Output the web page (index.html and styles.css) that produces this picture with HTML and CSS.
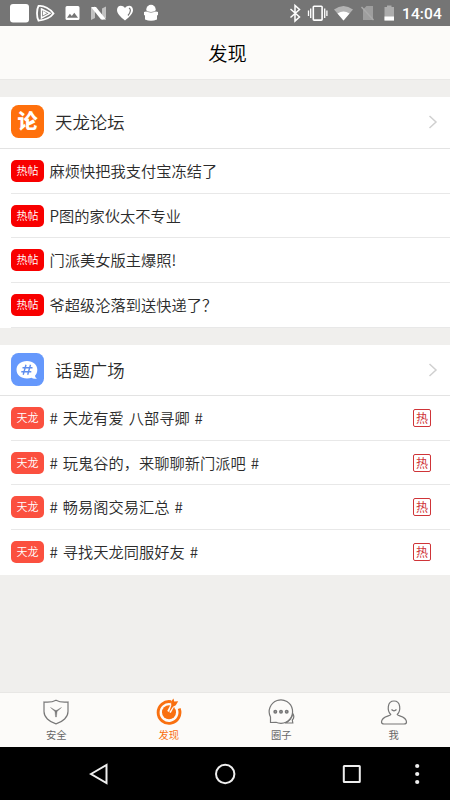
FILE: index.html
```html
<!DOCTYPE html>
<html lang="zh-CN">
<head>
<meta charset="utf-8">
<title>发现</title>
<link rel="stylesheet" href="styles.css">
</head>
<body>
<div class="status">
  <svg class="status-left" width="170" height="26" viewBox="0 0 170 26" fill="#fff">
    <rect x="10" y="4" width="19" height="18.500" rx="3"/>
    <path d="M38.500 6c5-1 12 3 15 7.500-3 4-9 6.500-15 7.200-2-4-2-11 0-14.700z" fill="none" stroke="#fff" stroke-width="1.800"/>
    <path d="M41.500 9l8.500 4.300-8.500 4.700z" fill="none" stroke="#fff" stroke-width="1.500"/><path d="M43 11l4 2.300-4 2.200z"/>
    <path d="M67 6h11q1.500 0 1.500 1.500v11q0 1.500-1.500 1.500H67q-1.500 0-1.500-1.500v-11Q65.500 6 67 6zm0 11.700h11l-3.700-5-2.500 3.300-1.900-2.200z" fill-rule="evenodd"/>
    <path d="M91 8l4-1.500V18l-4 2zM102 8.500l4-2V18l-4 2z" opacity=".55"/>
    <path d="M91 7h5l10 12.500h-5z"/>
    <path d="M125 20.500c-5-4-8-7-8-10.500 0-5 5.500-5.500 8-2 2.500-3.500 8-3 8 2 0 3.500-3 6.500-8 10.500z"/>
    <path d="M129 8c2 1 2 4-1 7.500" fill="none" stroke="#757575" stroke-width="1.200"/>
    <circle cx="151" cy="9.500" r="4.700"/><path d="M144 12l4-1 3 2.500 3-2.500 4 1v3l-1 .5v4q-6 2.500-12 0v-4l-1-.5z"/><path d="M146 11q5 3 10 0" fill="none" stroke="#757575" stroke-width=".6"/>
  </svg>
  <svg class="status-right" width="122" height="26" viewBox="280 0 122 26" fill="#fff">
    <path d="M290.500 9l9 8-4.500 4V5.500l4.500 4-9 8" fill="none" stroke="#fff" stroke-width="1.500"/>
    <rect x="313.300" y="6.300" width="8.800" height="13.800" rx=".8" fill="none" stroke="#fff" stroke-width="1.600"/>
    <path d="M310.700 8.500v9.500M308.500 10.500v5.500M324.700 8.500v9.500M326.900 10.500v5.500" stroke="#fff" stroke-width="1.300"/>
    <path d="M334 9.500q9.500-7 19 0l-9.500 11z" opacity=".45"/><path d="M337.500 13.500q6-4 12 0l-6 7z"/>
    <path d="M363 9.500l3.500-3.500H373v14h-10z" opacity=".3"/><path d="M361.500 7l12 13" stroke="#aaa" stroke-width="1.400"/>
    <path d="M387 5.500h4.500V7h2.500v13.500h-9.500V7h2.500z" opacity=".4"/><path d="M384.500 16.500h9.500v4h-9.500z"/>
  </svg>
  <time class="clock">14:04</time>
</div>
<header class="title">发现</header>
<main class="content">
  <section class="card">
    <div class="card-head">
      <svg class="app-icon" viewBox="0 0 33 33"><rect width="33" height="33" rx="7.500" fill="#ff700c"/><text class="glyph" x="16.500" y="24">论</text></svg>
      <h2>天龙论坛</h2>
      <svg class="chevron" viewBox="0 0 10 14"><path d="M1.500 1l6.500 6-6.500 6"/></svg>
    </div>
    <ul>
      <li><span class="badge">热帖</span><p>麻烦快把我支付宝冻结了</p></li>
      <li><span class="badge">热帖</span><p>P图的家伙太不专业</p></li>
      <li><span class="badge">热帖</span><p>门派美女版主爆照!</p></li>
      <li><span class="badge">热帖</span><p>爷超级沦落到送快递了？</p></li>
    </ul>
  </section>
  <section class="card topics">
    <div class="card-head">
      <svg class="app-icon" viewBox="0 0 33 33"><rect width="33" height="33" rx="7.500" fill="#6598fc"/><path d="M16 8c6 0 10.300 3.600 10.300 8.800 0 2.600-.9 4.500-2.300 6 .2 1.300.9 2.200 2 2.700-2.300.6-4.200.3-5.500-.8-1.300.5-2.800.8-4.500.8-6.300 0-10.500-3.500-10.500-8.700S9.700 8 16 8z" fill="#fff"/><path d="M15 11.800l-2.800 10M19.500 11.800l-2.800 10M11.500 14.800h10M10.300 18.800h10" stroke="#5f8eee" stroke-width="1.400"/></svg>
      <h2>话题广场</h2>
      <svg class="chevron" viewBox="0 0 10 14"><path d="M1.500 1l6.500 6-6.500 6"/></svg>
    </div>
    <ul>
      <li><span class="badge">天龙</span><p># 天龙有爱 八部寻卿 #</p><span class="hot">热</span></li>
      <li><span class="badge">天龙</span><p># 玩鬼谷的，来聊聊新门派吧 #</p><span class="hot">热</span></li>
      <li><span class="badge">天龙</span><p># 畅易阁交易汇总 #</p><span class="hot">热</span></li>
      <li><span class="badge">天龙</span><p># 寻找天龙同服好友 #</p><span class="hot">热</span></li>
    </ul>
  </section>
</main>
<nav class="tabs">
  <a class="tab"><svg viewBox="0 0 28 28"><path d="M14 2.200c-3.500 2-7.500 2.300-12 1.800v9.500C2 19 7 24 14 25.800 21 24 26 19 26 13.500V4c-4.500.5-8.500.2-12-1.800z"/><path d="M8.500 9.500l4.700 2.800h1.600l4.700-2.800-4.500 4-.6 5.500h-.8l-.6-5.500z" fill="#777" stroke-width=".4"/></svg><span>安全</span></a>
  <a class="tab active"><svg viewBox="0 0 28 28"><path d="M16 3.700A10.900 10.900 0 1 0 24.200 10.500" stroke-width="2.900"/><circle cx="14" cy="14.300" r="7" fill="#f97010" stroke="none"/><path d="M14 14l4-7.500" stroke="#fcfbf9" stroke-width="4"/><path d="M13.500 15.500l2.800-8-.3-4L18.500.5l.7 3 4-.2-2.400 4-2.800 1.500z" fill="#f97010" stroke="none"/></svg><span>发现</span></a>
  <a class="tab"><svg viewBox="0 0 28 28"><path d="M3.500 24.500V19A11.700 11.700 0 1 1 14 25.300c-2 0-3.500-.3-5-1z"/><path d="M25.800 15.500c1.500 2.500 1 5-.5 6.500l.5 3H18c4-1.500 7-4.500 7.800-9.500z"/><g stroke-width="1.600"><circle cx="8.300" cy="13.800" r="1.200"/><circle cx="14" cy="13.800" r="1.200"/><circle cx="19.700" cy="13.800" r="1.200"/></g></svg><span>圈子</span></a>
  <a class="tab"><svg viewBox="0 0 28 28"><path d="M10.800 16.500C7 13 7 3 14 3s7 10 3.200 13.500c.3 1.600 9.300 1.500 9.300 7.500 0 1.500-1 2-2.500 2H4c-1.500 0-2.500-.5-2.500-2 0-6 9-5.900 9.300-7.500z"/><path d="M11.500 11.500q2.500 2.500 5 0"/></svg><span>我</span></a>
</nav>
<footer class="system-nav">
  <svg width="450" height="53" viewBox="0 0 450 53" fill="none" stroke="#eee" stroke-width="2"><path d="M91 27l15.500-9v18z"/><circle cx="225.200" cy="27" r="9.200"/><rect x="343.800" y="19" width="16" height="16" rx=".5"/><g fill="#eee" stroke="none"><circle cx="417.200" cy="19" r="2.100"/><circle cx="417.200" cy="27" r="2.100"/><circle cx="417.200" cy="35" r="2.100"/></g></svg>
</footer>
</body>
</html>
```

FILE: styles.css
```css
* { box-sizing: border-box; margin: 0; padding: 0; }
body {
  display: flex; flex-direction: column; width: 450px; height: 800px; overflow: hidden;
  background: #f0efed; color: #2b2b2b; font-family: "Noto Sans CJK SC", sans-serif; font-weight: 350;
}
svg { display: block; flex: none; }
.status { display: flex; height: 26px; background: #757575; }
.status-right { margin-left: auto; }
.clock { width: 48px; color: #fff; font: 500 15.500px/28px Roboto, sans-serif; letter-spacing: .1px; }
.title {
  height: 54px; padding-left: 5px; background: #fcfbf9; border-bottom: 1px solid #e9e8e6;
  color: #000; font-size: 19.300px; line-height: 54px; text-align: center;
}
.content { flex: 1; padding-top: 17px; }
.card { height: 231px; margin-bottom: 17px; background: #fff; }
.card-head { display: flex; align-items: center; height: 52px; padding: 0 12px 2px 11px; border-bottom: 1px solid #e3e3e3; }
.app-icon { width: 33px; height: 33px; }
.glyph { fill: #fff; font-size: 20px; font-weight: 900; text-anchor: middle; }
h2 { flex: 1; margin-left: 11px; font-size: 17.400px; font-weight: 350; line-height: 26px; }
.chevron { width: 10px; height: 14px; fill: none; stroke: #d0d0d0; stroke-width: 1.500; }
ul { list-style: none; }
li { display: flex; align-items: center; height: 44.700px; margin-left: 11px; padding-right: 19px; border-bottom: 1px solid #e8e8e8; }
.badge { width: 33px; height: 22px; border-radius: 5px; background: #f80000; color: #fff; font-size: 11px; line-height: 21px; text-align: center; }
p { flex: 1; margin: 0 0 2px 5.500px; font-size: 15.250px; line-height: 22px; word-spacing: 1.500px; white-space: nowrap; }
.topics { height: 230px; }
.topics .card-head { height: 51px; padding-bottom: 1px; }
.topics .badge { background: #fb503f; }
.topics li:last-child { border-bottom: 0; }
.hot { width: 18px; height: 18px; border: 1.500px solid #cf3438; border-radius: 2px; color: #cf3438; font-size: 12px; font-weight: 400; line-height: 16px; text-align: center; }
.tabs { display: flex; height: 55px; background: #fcfbf9; border-top: 1px solid #e8e7e5; }
.tab { flex: 1; display: flex; flex-direction: column; align-items: center; padding-top: 5px; color: #666; font-size: 10.300px; font-weight: 400; line-height: 17px; }
.tab svg { width: 28px; height: 28px; fill: none; stroke: #777; stroke-width: 1.200; }
.tab.active { color: #f97010; }
.tab.active svg { stroke: #f97010; }
.system-nav { height: 53px; background: #000; }
```
